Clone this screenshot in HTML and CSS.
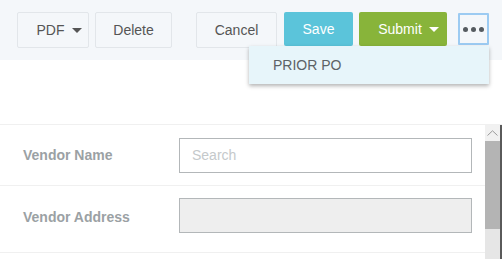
FILE: index.html
```html
<!DOCTYPE html>
<html lang="en">
<head>
    <meta charset="UTF-8">
    <title>Purchase Order</title>
    <link rel="stylesheet" href="styles.css">
</head>
<body>
    <div class="toolbar">
        <button class="btn btn-default btn-pdf">PDF <span class="caret"></span></button>
        <button class="btn btn-default btn-delete">Delete</button>
        <button class="btn btn-default btn-cancel">Cancel</button>
        <button class="btn btn-save">Save</button>
        <button class="btn btn-submit">Submit <span class="caret caret-white"></span></button>
        <button class="btn btn-more"><span class="dot"></span><span class="dot"></span><span class="dot"></span></button>

        <div class="menu">
            <div class="menu-item">PRIOR PO</div>
        </div>
    </div>

    <div class="spacer"></div>

    <div class="panel">
        <div class="form">
            <div class="form-row">
                <label class="form-label">Vendor Name</label>
                <input class="form-input" type="text" placeholder="Search">
            </div>
            <div class="form-row">
                <label class="form-label">Vendor Address</label>
                <input class="form-input form-input-disabled" type="text" disabled>
            </div>
        </div>
        <div class="scrollbar">
            <div class="scroll-up">
                <svg width="11" height="6" viewBox="0 0 11 6"><path d="M0.5 5.5 L5.5 0.8 L10.5 5.5" fill="none" stroke="#9a9a9a" stroke-width="1"/></svg>
            </div>
            <div class="scroll-thumb"></div>
            <div class="scroll-track"></div>
        </div>
    </div>
</body>
</html>
```

FILE: styles.css
```css
html, body {
    margin: 0;
    padding: 0;
}
body {
    width: 502px;
    height: 259px;
    overflow: hidden;
    background: #fff;
    font-family: "Liberation Sans", Arial, sans-serif;
}
.toolbar {
    position: relative;
    display: flex;
    align-items: flex-start;
    height: 60px;
    box-sizing: border-box;
    padding: 12px 0 0 17px;
    background: #f4f7fa;
}
.btn {
    height: 36px;
    box-sizing: border-box;
    border: 1px solid #e2e6ea;
    border-radius: 2px;
    background: #f4f7fa;
    color: #555;
    font-family: inherit;
    font-size: 14px;
    padding: 0;
    display: flex;
    align-items: center;
    justify-content: center;
}
.btn-pdf {
    width: 72px;
    padding-left: 12px;
}
.btn-delete {
    width: 77px;
    margin-left: 6px;
}
.btn-cancel {
    width: 81px;
    margin-left: 24px;
}
.btn-save {
    width: 69px;
    height: 34px;
    border: none;
    background: #5bc4da;
    color: #fff;
    margin-left: 7px;
}
.btn-submit {
    width: 88px;
    height: 34px;
    border: none;
    background: #88b43a;
    color: #fff;
    margin-left: 6px;
    padding-left: 11px;
}
.btn-more {
    width: 31px;
    height: 32px;
    margin-left: 11px;
    margin-top: 1px;
    border: 2px solid #9ccbf2;
    border-radius: 1px;
    gap: 3px;
}
.dot {
    width: 5px;
    height: 5px;
    border-radius: 50%;
    background: #555b60;
}
.caret {
    display: inline-block;
    width: 0;
    height: 0;
    margin-left: 7px;
    border-left: 5px solid transparent;
    border-right: 5px solid transparent;
    border-top: 5px solid #555;
}
.caret-white {
    border-top-color: #fff;
}
.menu {
    position: absolute;
    left: 249px;
    top: 46px;
    width: 240px;
    height: 38px;
    background: #e7f5fa;
    box-shadow: 0 2px 4px rgba(0, 0, 0, 0.3);
    z-index: 2;
}
.menu-item {
    padding: 11px 0 0 24px;
    font-size: 14px;
    color: #5c6266;
}
.spacer {
    height: 64px;
}
.panel {
    display: flex;
    border-top: 1px solid #f0f0f0;
}
.form {
    flex: 1;
}
.form-row {
    display: flex;
    align-items: center;
    height: 60px;
    border-bottom: 1px solid #f0f0f0;
    padding-left: 23px;
    padding-right: 13px;
}
.form-row + .form-row {
    height: 67px;
    align-items: flex-start;
    padding-top: 12px;
    box-sizing: border-box;
}
.form-label {
    width: 156px;
    font-size: 14px;
    font-weight: bold;
    color: #9ba1a4;
}
.form-row + .form-row .form-label {
    padding-top: 11px;
}
.form-input {
    width: 293px;
    height: 35px;
    box-sizing: border-box;
    border: 1px solid #b3b7b9;
    border-radius: 0;
    padding: 0 12px;
    font-family: inherit;
    font-size: 14px;
    background: #fff;
    outline: none;
}
.form-input::placeholder {
    color: #c5c9cb;
}
.form-input-disabled {
    background: #eeeeee;
}
.scrollbar {
    width: 15px;
    display: flex;
    flex-direction: column;
    border-right: 2px solid #5a5a5a;
    height: 134px;
}
.scroll-up {
    height: 16px;
    background: #f1f1f1;
    display: flex;
    align-items: center;
    justify-content: center;
}
.scroll-thumb {
    height: 88px;
    background: #b4b4b4;
}
.scroll-track {
    flex: 1;
    background: #e6e6e6;
}
```
